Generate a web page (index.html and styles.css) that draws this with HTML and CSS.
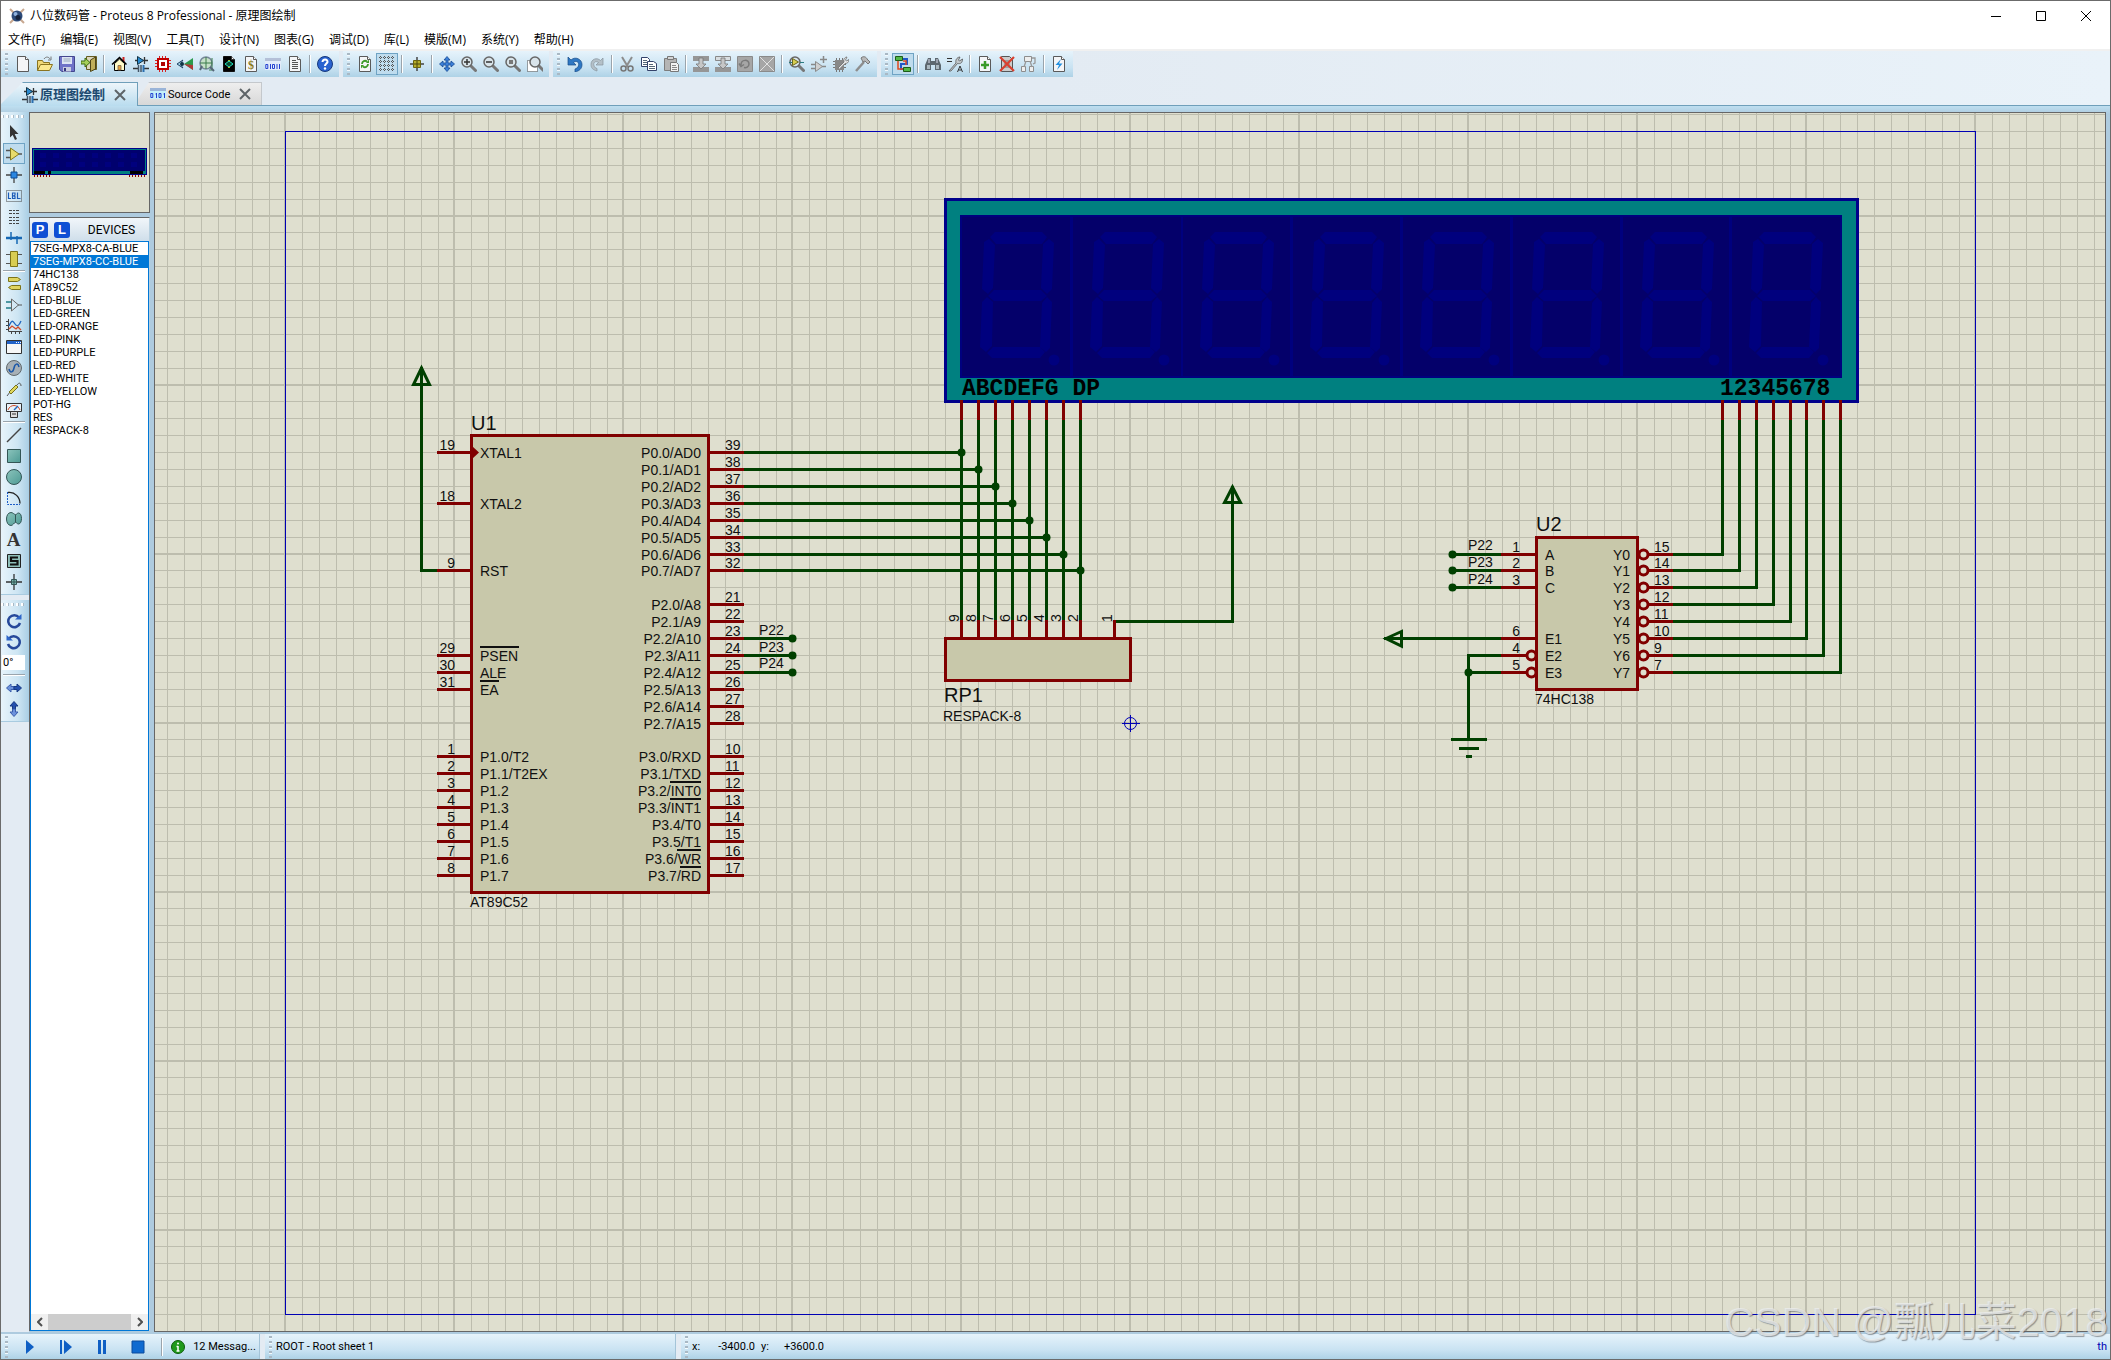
FILE: index.html
```html
<!DOCTYPE html>
<html lang="zh-CN">
<head>
<meta charset="utf-8">
<title>八位数码管 - Proteus 8 Professional - 原理图绘制</title>
<link rel="stylesheet" href="styles.css">
</head>
<body>
<svg class="defs" width="0" height="0" aria-hidden="true">
  <defs>
    <linearGradient id="gTeal" x1="0" y1="0" x2="1" y2="1"><stop offset="0" stop-color="#8cc4bc"/><stop offset="1" stop-color="#4d9a94"/></linearGradient>
    <symbol id="page" viewBox="0 0 16 16"><path d="M2.500 .5h8l3 3v12h-11z" fill="#f4f5f7" stroke="#5a5a5a"/><path d="M10.500 .5v3h3" fill="#fff" stroke="#5a5a5a"/></symbol>
    <symbol id="lens" viewBox="0 0 16 16"><path d="M9.500 9.500l5 5" stroke="#777" stroke-width="3" stroke-linecap="round"/><circle cx="6" cy="6" r="5" fill="#d9e4ea" stroke="#666" stroke-width="1.500"/></symbol>
    <symbol id="schem" viewBox="0 0 16 16"><path d="M2 4.500h13M11.500 1v7M0 12.500h5M11 12.500h5" stroke="#333" stroke-width="1.300"/><path d="M4.500 .5v8l6-4z" fill="#2a8ad0" stroke="#134"/><path d="M5.500 9v7M8 9v7" stroke="#456" stroke-width="1.500"/><path d="M10.500 9v7" stroke="#2a6fb0" stroke-width="2"/></symbol>
    <symbol id="code" viewBox="0 0 16 16"><path d="M0 2h16v11H0z" fill="#c4f0fa"/><path d="M0 2h16v3H0z" fill="#9ab4d8"/><path d="M.8 7.500h2v4h-2zM6.500 7v5M5.500 8h1M9 7.500h2v4H9zM14.500 7v5M13.500 8h1" fill="none" stroke="#2340d0"/></symbol>
    <symbol id="cross" viewBox="0 0 16 16"><path d="M3 3l10 10M13 3L3 13" stroke="#5e6468" stroke-width="2"/></symbol>
  </defs>
</svg>

<header class="titlebar">
  <svg class="app-icon" width="16" height="16" viewBox="0 0 16 16"><path d="M1 1l4 4M15 1l-4 4M1 15l4-4M15 15l-4-4" stroke="#c8a890" stroke-width="2"/><circle cx="8" cy="8" r="5.500" fill="#2c4a78"/><circle cx="6.500" cy="6" r="2" fill="#8eb0dc"/><circle cx="9" cy="9.500" r="2.500" fill="#14223c"/></svg>
  <h1 class="title">八位数码管 - Proteus 8 Professional - 原理图绘制</h1>
  <button class="win" aria-label="最小化"><svg width="10" height="10"><path d="M0 5.500h10" stroke="#000"/></svg></button>
  <button class="win" aria-label="最大化"><svg width="10" height="10"><path d="M.5 .5h9v9h-9z" fill="none" stroke="#000"/></svg></button>
  <button class="win" aria-label="关闭"><svg width="10" height="10"><path d="M0 0l10 10M10 0L0 10" stroke="#000"/></svg></button>
</header>

<nav class="menu">
  <button>文件(F)</button><button>编辑(E)</button><button>视图(V)</button><button>工具(T)</button><button>设计(N)</button><button>图表(G)</button><button>调试(D)</button><button>库(L)</button><button>模版(M)</button><button>系统(Y)</button><button>帮助(H)</button>
</nav>

<div class="toolbars">
  <div class="bar">
    <span class="grip"></span>
    <button aria-label="New"><svg viewBox="0 0 16 16"><use href="#page"/></svg></button>
    <button aria-label="Open"><svg viewBox="0 0 16 16"><path d="M.5 14.500v-10h5l1 2h6v2" fill="#f0d878" stroke="#8a7420"/><path d="M.5 14.500l3-6h12l-3 6z" fill="#fbe88e" stroke="#8a7420"/><path d="M7 3c2-3 5-2 6 0M14 .5V4h-3" fill="none" stroke="#777"/></svg></button>
    <button aria-label="Save"><svg viewBox="0 0 16 16"><path d="M.5 .5h15v15H3l-2.500-2z" fill="#6f72c8" stroke="#44478e"/><path d="M3 1h10v7H3z" fill="#dde4f4"/><path d="M4.500 3h7M4.500 5h7" stroke="#9ab"/><path d="M4 11h8v4.500H4z" fill="#c9cde0"/><path d="M5 12h2v3H5z" fill="#33367e"/></svg></button>
    <button aria-label="Close"><svg viewBox="0 0 16 16"><path d="M5.500 .5h10v13h-10z" fill="#dcd7bc" stroke="#665c22"/><path d="M9.500 4l5-3v12l-5 2.500z" fill="#c0ae5a" stroke="#4d4518"/><path d="M0 5h4V2l5 4.500L4 11V8H0z" fill="#a6cf5a" stroke="#3e6b12"/></svg></button>
    <span class="sep"></span>
    <button aria-label="Home"><svg viewBox="0 0 16 16"><path d="M11.500 1h2v5h-2z" fill="#c22"/><path d="M3.500 7.500v7h10v-7L8.500 3z" fill="#fffbc8" stroke="#000"/><path d="M1 8.500L8.500 1.500 15.500 8.500" fill="none" stroke="#000" stroke-width="1.500"/><path d="M7 9.500h3V14H7z" fill="#e9a23a" stroke="#765" stroke-width=".8"/></svg></button>
    <button aria-label="Schematic"><svg viewBox="0 0 16 16"><use href="#schem"/></svg></button>
    <button aria-label="PCB"><svg viewBox="0 0 16 16"><path d="M4.500 0v16M7.500 0v16M10.500 0v16M0 4.500h16M0 7.500h16M0 10.500h16" stroke="#d82020"/><path d="M3 3h10v10H3z" fill="#fff" stroke="#c00000" stroke-width="2"/><path d="M6 6h4v4H6z" fill="#b00000"/></svg></button>
    <button aria-label="3D"><svg viewBox="0 0 16 16"><path d="M7 8l9-6v12z" fill="#2c9a4c"/><path d="M7 8l9 1v5z" fill="#b03838"/><path d="M0 8l6-4c-2 2-2 6 0 8z" fill="#9fd0e4" stroke="#246"/><circle cx="5" cy="8" r="2" fill="#134"/></svg></button>
    <button aria-label="Gerber"><svg viewBox="0 0 16 16"><circle cx="7" cy="7" r="6" fill="#c6e0c8" stroke="#789" stroke-width="1.500"/><path d="M1 7h12M7 1v12M13 2v12h-3" fill="none" stroke="#3a7a4a"/><path d="M3 10l-2 4M11 11l4 4" stroke="#567" stroke-width="2"/></svg></button>
    <button aria-label="Design Explorer"><svg viewBox="0 0 16 16"><path d="M2.500 .5h8l3 3v12h-11z" fill="#000" stroke="#111"/><path d="M10.500 .5v3h3" fill="#fff" stroke="#333"/><path d="M8 4v2M8 10v2" stroke="#f0f020" stroke-width="1.500"/><path d="M4 8l4-3 4 3-4 3z" fill="#0a4a30" stroke="#20e0c0"/></svg></button>
    <button aria-label="BOM"><svg viewBox="0 0 16 16"><use href="#page"/><text x="8" y="13" font-size="12" text-anchor="middle" class="dollar">$</text></svg></button>
    <button aria-label="Source"><svg viewBox="0 0 16 16"><path d="M0 2h16v3H0z" fill="#b4c0d8"/><path d="M0 5h16v9H0z" fill="#e2ecfa"/><path d="M.8 8.500h2v4h-2zM5.500 8v5M7.500 8.500h2v4h-2zM12 8v5M14.500 8v5" fill="none" stroke="#2340d0"/></svg></button>
    <button aria-label="Notes"><svg viewBox="0 0 16 16"><use href="#page"/><path d="M5 4.500h4M5 6.500h6M5 8.500h6M5 10.500h6M5 12.500h6" stroke="#555"/></svg></button>
    <span class="sep"></span>
    <button aria-label="Help"><svg viewBox="0 0 16 16"><circle cx="8" cy="8" r="7.500" fill="#2a63d0" stroke="#17397c"/><path d="M5.500 6c0-3.500 5.500-3 5 0-.2 1.500-2.500 1.700-2.500 4" fill="none" stroke="#fff" stroke-width="2"/><circle cx="8" cy="12.500" r="1.200" fill="#fff"/></svg></button>
  </div>
  <div class="bar">
    <span class="grip"></span>
    <button aria-label="Redraw"><svg viewBox="0 0 16 16"><use href="#page"/><path d="M5 8c0-3 3-4 5-2.500M11 8c0 3-3 4-5 2.500" fill="none" stroke="#3d9a28" stroke-width="1.800"/><path d="M9 7h3V3.500zM7 9H4v3.500z" fill="#3d9a28"/></svg></button>
    <button class="on" aria-label="Grid"><svg viewBox="0 0 16 16"><path d="M0 1.500h16M0 5.500h16M0 9.500h16M0 13.500h16M1.500 0v16M5.500 0v16M9.500 0v16M13.500 0v16" stroke="#555" stroke-dasharray="1 1"/></svg></button>
    <span class="sep"></span>
    <button aria-label="Origin"><svg viewBox="0 0 16 16"><path d="M8 1v14M1 8h14" stroke="#444" stroke-width="1.500"/><path d="M4.500 4.500h7v7h-7z" fill="#b5ac28" stroke="#6a6410"/><path d="M8 5v6M5 8h6" stroke="#4a4608"/></svg></button>
    <span class="sep"></span>
    <button aria-label="Pan"><svg viewBox="0 0 16 16"><path d="M8 .5l3 3.500H9v3h3V5l3.500 3-3.500 3V9H9v3h2l-3 3.500L5 12h2V9H4v2L.5 8 4 5v2h3V4H5z" fill="#3c80d8" stroke="#164a94" stroke-width=".8"/></svg></button>
    <button aria-label="Zoom in"><svg viewBox="0 0 16 16"><use href="#lens"/><path d="M3 6h6M6 3v6" stroke="#333" stroke-width="1.500"/></svg></button>
    <button aria-label="Zoom out"><svg viewBox="0 0 16 16"><use href="#lens"/><path d="M3 6h6" stroke="#333" stroke-width="1.500"/></svg></button>
    <button aria-label="Zoom all"><svg viewBox="0 0 16 16"><use href="#lens"/><path d="M4 4h4v4H4z" fill="#777"/></svg></button>
    <button aria-label="Zoom area"><svg viewBox="0 0 16 16"><path d="M.5 4.500h10v11H.5z" fill="#fff" stroke="#444" stroke-dasharray="1 1"/><use href="#lens" x="2"/></svg></button>
  </div>
  <div class="bar">
    <span class="grip"></span>
    <button aria-label="Undo"><svg viewBox="0 0 16 16"><path d="M1 1v8h8L6.500 6.500c3-2.500 6 0 5 3-.5 2-2 3-3.500 3.500V16c4-1 7-3 7-7.500C15 3 8 0 4 4z" fill="#2f78c4" stroke="#174a86" stroke-width=".7"/></svg></button>
    <button aria-label="Redo"><svg viewBox="0 0 16 16"><path d="M14 2v7H7l2.500-2.500c-3-2-5.500 0-4.500 3 .5 2 1.500 2.500 3 3V15c-4-1-6-3-6-6.500C2 3 8 1 11.500 4.500z" fill="#b4c0c8" stroke="#87939c" stroke-width=".7"/></svg></button>
    <span class="sep"></span>
    <button aria-label="Cut"><svg viewBox="0 0 16 16"><path d="M3 1l6 10M13 1L7 11" stroke="#8d8d8d" stroke-width="2"/><circle cx="4.500" cy="12.500" r="2.500" fill="none" stroke="#777" stroke-width="1.500"/><circle cx="11.500" cy="12.500" r="2.500" fill="none" stroke="#777" stroke-width="1.500"/></svg></button>
    <button aria-label="Copy"><svg viewBox="0 0 16 16"><path d="M.5 1.500h6l2 2v7h-8z" fill="#fff" stroke="#34426a"/><path d="M2 4.500h4M2 6.500h4M2 8.500h4" stroke="#567"/><path d="M6.500 5.500h6l3 2v7h-9z" fill="#fff" stroke="#34426a"/><path d="M8 8.500h4M8 10.500h6M8 12.500h6" stroke="#567"/></svg></button>
    <button aria-label="Paste"><svg viewBox="0 0 16 16"><path d="M1.500 2.500h12v12h-12z" fill="#b5b5b5" stroke="#7d7d7d"/><path d="M4.500 .5h6v3h-6z" fill="#d5d5d5" stroke="#777"/><path d="M7.500 6.500h6l2 2v7h-8z" fill="#f2f2f2" stroke="#777"/><path d="M9 9.500h4M9 11.500h5M9 13.500h5" stroke="#888"/></svg></button>
    <span class="sep"></span>
    <button aria-label="Block copy"><svg viewBox="0 0 16 16"><path d="M0 0h16v5H0zM0 11h16v5H0z" fill="#969696"/><path d="M6 2h4v6h3l-5 5-5-5h3z" fill="#c6c6c6" stroke="#777" stroke-width=".8"/></svg></button>
    <button aria-label="Block move"><svg viewBox="0 0 16 16"><path d="M.5 .5h15v4H.5z" fill="#d8dde0" stroke="#888"/><path d="M0 11h16v5H0z" fill="#969696"/><path d="M6 2h4v6h3l-5 5-5-5h3z" fill="#c6c6c6" stroke="#777" stroke-width=".8"/></svg></button>
    <button aria-label="Block rotate"><svg viewBox="0 0 16 16"><path d="M.5 .5h15v15H.5z" fill="#a6a6a6" stroke="#8a8a8a"/><path d="M4 9c0-6 8-6 8-1 0 3-3 4-5 3.500M2 7.500l2 3 3-2" fill="none" stroke="#7a7a7a" stroke-width="1.500"/></svg></button>
    <button aria-label="Block delete"><svg viewBox="0 0 16 16"><path d="M.5 .5h15v15H.5z" fill="#a6a6a6" stroke="#8a8a8a"/><path d="M1 1l14 14M15 1L1 15" stroke="#e2e2e2"/></svg></button>
    <span class="sep"></span>
    <button aria-label="Pick"><svg viewBox="0 0 16 16"><use href="#lens"/><path d="M3.500 2.500v7l6-3.500z" fill="#d8cf50" stroke="#6d6820"/><path d="M0 6.500h3M11 6.500h4" stroke="#2a7a80"/></svg></button>
    <button aria-label="Make device"><svg viewBox="0 0 16 16"><path d="M4.500 5.500v10l7-5z" fill="#cfcfcf" stroke="#8b8b8b"/><path d="M0 8.500h4M0 12.500h4M11 10.500h4M12.500 0v7M9 3.500h7" stroke="#888" stroke-width="1.500"/></svg></button>
    <button aria-label="Packaging"><svg viewBox="0 0 16 16"><path d="M3.500 2v14M6.500 2v14M9.500 2v14M0 5.500h13M0 8.500h13M0 11.500h13" stroke="#777"/><path d="M2 4h9v10H2z" fill="#888"/><path d="M5 12l6-6c-1-4 2-5 3-5l-1.500 3 1 1L16 3.500c0 3-2 4-4 4l-6 6z" fill="#e8e8e8" stroke="#6c6c6c" stroke-width=".8"/></svg></button>
    <button aria-label="Decompose"><svg viewBox="0 0 16 16"><path d="M1 15L9 6" stroke="#8e8e8e" stroke-width="2.500"/><path d="M6 2c3-3 6 0 6 1l3 3-2 2-3-3-2 1z" fill="#b9b9b9" stroke="#777"/></svg></button>
  </div>
  <div class="bar">
    <span class="grip"></span>
    <button class="on" aria-label="Wire autorouter"><svg viewBox="0 0 16 16"><path d="M6 3h6v5H6v5h4" fill="none" stroke="#2058c8" stroke-width="2"/><path d="M3 5v8h7M8 5h3v4" fill="none" stroke="#e04820" stroke-width="1.500"/><path d="M.5 .5h7v4h-7zM8.500 11.500h7v4h-7z" fill="#52b848" stroke="#1d5c18"/></svg></button>
    <span class="sep"></span>
    <button aria-label="Search"><svg viewBox="0 0 16 16"><path d="M3 2h3v3h4V2h3l3 7v5h-6v-5H6v5H0V9z" fill="#5d6870"/><path d="M2 9h3v4H2zM11 9h3v4h-3z" fill="#aab8c0"/><path d="M4 3v4M12 3v4" stroke="#dde"/></svg></button>
    <button aria-label="Property assignment"><svg viewBox="0 0 16 16"><path d="M0 2.500h5M0 5.500h5" stroke="#333"/><path d="M2 15l7-8c-1-4 2-6 4-6l-1.500 3 1 1L15.500 3c0 4-2 5-5 4.500L4 15z" fill="#c2c8cc" stroke="#555" stroke-width=".8"/><path d="M10.500 16l2.500-6 2.500 6M11.500 14h3" fill="none" stroke="#333"/></svg></button>
    <span class="sep"></span>
    <button aria-label="New sheet"><svg viewBox="0 0 16 16"><use href="#page"/><path d="M8 5v8M4 9h8" stroke="#3a9a28" stroke-width="2.500"/></svg></button>
    <button aria-label="Delete sheet"><svg viewBox="0 0 16 16"><path d="M2.500 .5h8l3 3v12h-11z" fill="#ccc" stroke="#555"/><path d="M5 5h6M5 8h6M5 11h6" stroke="#777"/><path d="M1 1l14 14M15 1L1 15" stroke="#d84030" stroke-width="2.200"/></svg></button>
    <button aria-label="Goto sheet"><svg viewBox="0 0 16 16"><path d="M3.500 .5h7v5h-7zM.5 10.500h4v5h-4zM8.500 10.500h4v5h-4z" fill="#eee" stroke="#8d8d8d"/><path d="M5 5l-2 6M9 5l2 6M11 2h3v5l-2 1" fill="none" stroke="#999" stroke-width="1.300"/></svg></button>
    <span class="sep"></span>
    <button aria-label="Electrical check"><svg viewBox="0 0 16 16"><use href="#page"/><path d="M10 3L4.500 9H8l-2 5 5.500-6.500H8z" fill="#2290e0"/></svg></button>
  </div>
</div>

<div class="tabs">
  <div class="tab active"><button class="tab-name"><svg class="ico"><use href="#schem"/></svg>原理图绘制</button><button class="tab-x" aria-label="关闭"><svg class="ico"><use href="#cross"/></svg></button></div>
  <div class="tab"><button class="tab-name"><svg class="ico"><use href="#code"/></svg>Source Code</button><button class="tab-x" aria-label="关闭"><svg class="ico"><use href="#cross"/></svg></button></div>
</div>

<main class="work">
  <div class="strips">
    <div class="strip">
      <span class="grip-h"></span>
      <button aria-label="Selection"><svg viewBox="0 0 16 16"><path d="M4 0l8.500 9H8.700l2.300 5-2 1-2.300-5L4 12.500z" fill="#333"/></svg></button>
      <button class="on" aria-label="Component"><svg viewBox="0 0 16 16"><path d="M0 4.500h4M0 11.500h4M11 8h5" stroke="#555" stroke-width="1.500"/><path d="M4.500 2v12L13 8z" fill="#e8dc6c" stroke="#857b1e"/></svg></button>
      <button aria-label="Junction"><svg viewBox="0 0 16 16"><path d="M8 0v16M0 8h16" stroke="#444" stroke-width="1.300"/><path d="M5 5h6v6H5z" fill="#2a86e0" stroke="#0c4a96"/></svg></button>
      <button aria-label="Label"><svg viewBox="0 0 16 16"><path d="M.5 2.500h15v11H.5z" fill="none" stroke="#444" stroke-dasharray="1 1"/><path d="M2.500 4.500v6h2.500M6.500 5h2.500v2L8 8l1 .5v2H6.500zM6.500 7.800h2M11.500 4.500v6h3" stroke="#1c5cb8" fill="none" stroke-width="1.200"/></svg></button>
      <button aria-label="Script"><svg viewBox="0 0 16 16"><path d="M3 1.500h11M3 4.500h11M3 8.500h11M3 11.500h11M3 14.500h11" stroke="#444" stroke-dasharray="3 1 2 1"/></svg></button>
      <button aria-label="Bus"><svg viewBox="0 0 16 16"><path d="M0 8h16" stroke="#1668b4" stroke-width="2.500"/><path d="M5 2v8M11 6v8" stroke="#1668b4" stroke-width="1.500"/></svg></button>
      <button aria-label="Subcircuit"><svg viewBox="0 0 16 16"><path d="M0 3.500h16M0 12.500h16" stroke="#555"/><path d="M4.500 .5h7v15h-7z" fill="#d8cd52" stroke="#7d7418"/></svg></button>
      <span class="sep-h"></span>
      <button aria-label="Terminal"><svg viewBox="0 0 16 16"><path d="M2.500 1.500h9l3 2-3 2h-9zM14.500 9.500h-9l-3 2 3 2h9z" fill="#dfd460" stroke="#7d7418"/></svg></button>
      <button aria-label="Pin"><svg viewBox="0 0 16 16"><path d="M0 5h5M0 11h5" stroke="#1f7c88" stroke-width="1.500"/><path d="M5.500 2v12l7-6z" fill="none" stroke="#666"/><path d="M12 8h4" stroke="#555"/></svg></button>
      <button aria-label="Graph"><svg viewBox="0 0 16 16"><path d="M2.500 1v12.500H16M0 3.500h2M0 7.500h2M0 11.500h2M5.500 14v2M9.500 14v2M13.500 14v2" stroke="#444" fill="none"/><path d="M3 8c3-7 4-5 6-2s4 2 6-3" fill="none" stroke="#2068c0" stroke-width="1.300"/><path d="M3 11l3-3 4 3 2-2 3 3" fill="none" stroke="#d04a28" stroke-width="1.300"/></svg></button>
      <button aria-label="Popup"><svg viewBox="0 0 16 16"><path d="M.5 1.500h15v13H.5z" fill="#f7f7f7" stroke="#333"/><path d="M1 2h14v3H1z" fill="#2262c8"/><path d="M10 3.500h5" stroke="#fff" stroke-dasharray="1 1"/></svg></button>
      <button aria-label="Generator"><svg viewBox="0 0 16 16"><circle cx="8" cy="8" r="7.500" fill="#a7b0b6" stroke="#60686c"/><path d="M3 9c1 4 4 4 5-1s4-5 5-1" fill="none" stroke="#1c58a8" stroke-width="1.500"/></svg></button>
      <button aria-label="Probe"><svg viewBox="0 0 16 16"><path d="M1 15l3-4M11 4c2-3 4-2 4 1" fill="none" stroke="#555"/><path d="M3 11l7-7 2 2-7 7z" fill="#dfd75c" stroke="#77701c"/></svg></button>
      <button aria-label="Instrument"><svg viewBox="0 0 16 16"><path d="M.5 1.500h15v8H.5z" fill="#e8f2fa" stroke="#333"/><path d="M2 8c2-6 10-6 12 0" fill="none" stroke="#d04a28"/><path d="M8 8l4-4" stroke="#2068c0" stroke-width="1.500"/><path d="M4.500 9.500h7v6h-7z" fill="#ddd" stroke="#333"/><path d="M6 12h4" stroke="#333"/></svg></button>
      <span class="sep-h"></span>
      <button aria-label="Line"><svg viewBox="0 0 16 16"><path d="M1 15L15 1" stroke="#444" stroke-width="1.500"/></svg></button>
      <button aria-label="Box"><svg viewBox="0 0 16 16"><path d="M1.500 1.500h13v13h-13z" fill="url(#gTeal)" stroke="#355"/></svg></button>
      <button aria-label="Circle"><svg viewBox="0 0 16 16"><circle cx="8" cy="8" r="7.500" fill="url(#gTeal)" stroke="#355"/></svg></button>
      <button aria-label="Arc"><svg viewBox="0 0 16 16"><path d="M1.500 2v12.500H14" fill="none" stroke="#1c5cc8" stroke-dasharray="2 1"/><path d="M2 2.500c7-1 12 5 12 11" fill="none" stroke="#222" stroke-width="1.300"/></svg></button>
      <button aria-label="Path"><svg viewBox="0 0 16 16"><path d="M5 1.500c2 0 3 2 4.500 2S11 2 12.500 2c4 0 4 11 0 11-1.500 0-1.500-1.500-3-1.500S7 14.500 5 14.500c-6 0-6-13 0-13zM9.500 4v7" fill="url(#gTeal)" stroke="#355"/></svg></button>
      <button class="serif" aria-label="Text">A</button>
      <button aria-label="Symbol"><svg viewBox="0 0 16 16"><path d="M1.500 1.500h13v13h-13z" fill="#8fc0ba" stroke="#222"/><path d="M12 4.500H5v3.500h6.500v3.500H4" fill="none" stroke="#111" stroke-width="2.200"/></svg></button>
      <button aria-label="Marker"><svg viewBox="0 0 16 16"><path d="M8 0v16M0 8h16" stroke="#333" stroke-width="1.300"/><path d="M5.500 5.500h5v5h-5z" fill="#76b3aa" stroke="#355"/><path d="M8 5v6M5 8h6" stroke="#355"/></svg></button>
    </div>
    <div class="strip">
      <span class="grip-h"></span>
      <button aria-label="Rotate clockwise"><svg viewBox="0 0 16 16"><path d="M13 4.500A6 6 0 1 0 14 10" fill="none" stroke="#26489a" stroke-width="2.500"/><path d="M9 6.500h6.500V1z" fill="#2f66c8"/></svg></button>
      <button aria-label="Rotate anticlockwise"><svg viewBox="0 0 16 16"><path d="M3 4.500A6 6 0 1 1 2 10" fill="none" stroke="#26489a" stroke-width="2.500"/><path d="M7 6.500H.5V1z" fill="#2f66c8"/></svg></button>
      <input class="angle" aria-label="Angle" value="0°">
      <span class="sep-h"></span>
      <button aria-label="Mirror X"><svg viewBox="0 0 16 16"><path d="M8 6.500H5V4L.5 8 5 12V9.500h3z" fill="#6c92dc" stroke="#3a5cab"/><path d="M8 6.500h3V4l4.500 4-4.500 4V9.500H8z" fill="#2450ae" stroke="#173a84"/></svg></button>
      <button aria-label="Mirror Y"><svg viewBox="0 0 16 16"><path d="M6.500 8V5H4L8 .5 12 5H9.500v3z" fill="#2450ae" stroke="#173a84"/><path d="M6.500 8v3H4l4 4.500 4-4.500H9.500V8z" fill="#6c92dc" stroke="#3a5cab"/></svg></button>
    </div>
  </div>

  <aside class="side">
    <div class="preview">
      <svg width="116" height="30" viewBox="0 0 116 30" shape-rendering="crispEdges"><path d="M0 0h115v27H0z" fill="#00008b"/><path d="M1 1h113v25H1z" fill="#008080"/><path d="M2 2h111v21H2z" fill="#00006e"/><path d="M8 7h100M8 16h100" stroke="#00007e" stroke-width="5" stroke-dasharray="6 7"/><path d="M2 23h11v3H2zM16 23h3v3h-3zM98 23h13v3H98z" fill="#000"/><path d="M2.500 27v2M5.500 27v2M8.500 27v2M11.500 27v2M14.500 27v2M17.500 27v2M97.500 27v2M100.500 27v2M103.500 27v2M106.500 27v2M109.500 27v2M112.500 27v2" stroke="#900000"/></svg>
    </div>
    <div class="devices">
      <div class="dev-head"><button class="sq">P</button><button class="sq">L</button><h2>DEVICES</h2></div>
      <div class="dev-body">
        <ul>
          <li><button>7SEG-MPX8-CA-BLUE</button></li>
          <li><button class="sel">7SEG-MPX8-CC-BLUE</button></li>
          <li><button>74HC138</button></li>
          <li><button>AT89C52</button></li>
          <li><button>LED-BLUE</button></li>
          <li><button>LED-GREEN</button></li>
          <li><button>LED-ORANGE</button></li>
          <li><button>LED-PINK</button></li>
          <li><button>LED-PURPLE</button></li>
          <li><button>LED-RED</button></li>
          <li><button>LED-WHITE</button></li>
          <li><button>LED-YELLOW</button></li>
          <li><button>POT-HG</button></li>
          <li><button>RES</button></li>
          <li><button>RESPACK-8</button></li>
        </ul>
        <div class="scroll">
          <button aria-label="向左"><svg width="6" height="10"><path d="M5 1L1 5l4 4" fill="none" stroke="#505050" stroke-width="2"/></svg></button>
          <span class="thumb"></span>
          <button aria-label="向右"><svg width="6" height="10"><path d="M1 1l4 4-4 4" fill="none" stroke="#505050" stroke-width="2"/></svg></button>
        </div>
      </div>
    </div>
  </aside>

  <section class="canvas">
    <svg class="sheet" aria-label="Schematic">
      <defs>
        <pattern id="grid" x="453" y="384" width="169" height="169" patternUnits="userSpaceOnUse">
          <path shape-rendering="crispEdges" fill="#bdbdae" d="M0 0h2v169H0zM18 0h1v169h-1zM35 0h1v169h-1zM52 0h1v169h-1zM69 0h1v169h-1zM86 0h1v169h-1zM103 0h1v169h-1zM120 0h1v169h-1zM137 0h1v169h-1zM154 0h1v169h-1zM0 0h169v2H0zM0 17h169v1H0zM0 34h169v1H0zM0 51h169v1H0zM0 68h169v1H0zM0 85h169v1H0zM0 102h169v1H0zM0 119h169v1H0zM0 136h169v1H0zM0 153h169v1H0z"/>
        </pattern>
        <g id="digit">
          <path class="seg" d="M990 237l5-5h47l5 5-5 7h-46zM988 296l6-6h47l6 6-6 5h-47zM987 353l6-6h47l5 5-5 6h-48zM984 242l5-3 6 6-2 43-5 6-6-5zM1043 244l6-5 5 4-2 46-5 5-6-6zM982 302l5-5 6 5-1 44-6 6-6-5zM1042 303l5-6 5 5-2 46-4 4-6-5z"/>
          <circle class="seg" cx="1054" cy="360" r="5.500"/>
        </g>
      </defs>
      <g transform="translate(-155 -113)">
        <rect x="155" y="113" width="100%" height="100%" fill="url(#grid)"/>
        <rect class="frame" x="285.500" y="131.500" width="1690" height="1183"/>

        <!-- eight digit display -->
        <rect x="945.500" y="199.500" width="912" height="202" fill="#008080" stroke="#00008b" stroke-width="3"/>
        <path fill="#00007e" d="M960 215h882v163H960z"/>
        <path fill="#04006a" d="M962 217h108v159H962zM1073 217h108v159h-108zM1183 217h107v159h-107zM1293 217h107v159h-107zM1403 217h107v159h-107zM1513 217h107v159h-107zM1623 217h106v159h-106zM1732 217h108v159h-108z"/>
        <use href="#digit"/><use href="#digit" x="110"/><use href="#digit" x="220"/><use href="#digit" x="330"/><use href="#digit" x="440"/><use href="#digit" x="550"/><use href="#digit" x="660"/><use href="#digit" x="769"/>
        <text class="lcd" x="962" y="395">ABCDEFG DP</text>
        <text class="lcd" x="1720" y="395">12345678</text>

        <!-- component bodies -->
        <g class="body">
          <rect x="471.500" y="435.500" width="237" height="457"/>
          <rect x="945.500" y="638.500" width="185" height="42"/>
          <rect x="1536.500" y="537.500" width="101" height="152"/>
        </g>

        <!-- wires -->
        <path class="wire" d="M744 452.500H961.500M744 469.500H978.500M744 486.500H995.500M744 503.500H1012.500M744 520.500H1029.500M744 537.500H1046.500M744 554.500H1063.500M744 570.500H1080.500M961.500 420V620M978.500 420V620M995.500 420V620M1012.500 420V620M1029.500 420V620M1046.500 420V620M1063.500 420V620M1080.500 420V620M1113 621.500H1232.500V486M437 570.500H421.500V367M744 638.500H792M744 655.500H792M744 672.500H792M1452 554.500H1501M1452 570.500H1501M1452 587.500H1501M1501 638.500H1384M1501 655.500H1468.500V739M1501 672.500H1468.500M1451 739.500H1487M1459 748.500H1479M1466 756.500H1472"/>
        <path class="wire" d="M1673 554.500H1722.500V420M1673 570.500H1739.500V420M1673 587.500H1756.500V420M1673 604.500H1773.500V420M1673 621.500H1790.500V420M1673 638.500H1806.500V420M1673 655.500H1823.500V420M1673 672.500H1840.500V420"/>
        <path class="term" d="M421.500 368L413.500 384.500H429.500ZM1232.500 487L1224.500 502.500H1240.500ZM1386 638.500L1401.500 631.500V646Z"/>
        <g class="dot">
          <circle cx="961.500" cy="452.500" r="4"/><circle cx="978.500" cy="469.500" r="4"/><circle cx="995.500" cy="486.500" r="4"/><circle cx="1012.500" cy="503.500" r="4"/><circle cx="1029.500" cy="520.500" r="4"/><circle cx="1046.500" cy="537.500" r="4"/><circle cx="1063.500" cy="554.500" r="4"/><circle cx="1080.500" cy="570.500" r="4"/>
          <circle cx="792.500" cy="638.500" r="4"/><circle cx="792.500" cy="655.500" r="4"/><circle cx="792.500" cy="672.500" r="4"/>
          <circle cx="1452.500" cy="554.500" r="4"/><circle cx="1452.500" cy="570.500" r="4"/><circle cx="1452.500" cy="587.500" r="4"/><circle cx="1468.500" cy="672.500" r="4"/>
        </g>

        <!-- pins -->
        <path class="pin" d="M437 452.500h34M437 503.500h34M437 570.500h34M437 655.500h34M437 672.500h34M437 689.500h34M437 756.500h34M437 773.500h34M437 790.500h34M437 807.500h34M437 824.500h34M437 841.500h34M437 858.500h34M437 875.500h34"/>
        <path class="pin" d="M710 452.500h34M710 469.500h34M710 486.500h34M710 503.500h34M710 520.500h34M710 537.500h34M710 554.500h34M710 570.500h34M710 604.500h34M710 621.500h34M710 638.500h34M710 655.500h34M710 672.500h34M710 689.500h34M710 706.500h34M710 723.500h34M710 756.500h34M710 773.500h34M710 790.500h34M710 807.500h34M710 824.500h34M710 841.500h34M710 858.500h34M710 875.500h34"/>
        <path class="pin" d="M961.500 400v20M978.500 400v20M995.500 400v20M1012.500 400v20M1029.500 400v20M1046.500 400v20M1063.500 400v20M1080.500 400v20M1722.500 400v20M1739.500 400v20M1756.500 400v20M1773.500 400v20M1790.500 400v20M1806.500 400v20M1823.500 400v20M1840.500 400v20M961.500 620v18M978.500 620v18M995.500 620v18M1012.500 620v18M1029.500 620v18M1046.500 620v18M1063.500 620v18M1080.500 620v18M1114.500 620v18"/>
        <path class="pin" d="M1501 554.500h35M1501 570.500h35M1501 587.500h35M1501 638.500h35M1501 655.500h26M1501 672.500h26M1648 554.500h25M1648 570.500h25M1648 587.500h25M1648 604.500h25M1648 621.500h25M1648 638.500h25M1648 655.500h25M1648 672.500h25"/>
        <path fill="#800000" d="M472 446l7 6.500-7 6.500z"/>
        <g class="bubble">
          <circle cx="1643.500" cy="554.500" r="4.500"/><circle cx="1643.500" cy="570.500" r="4.500"/><circle cx="1643.500" cy="587.500" r="4.500"/><circle cx="1643.500" cy="604.500" r="4.500"/><circle cx="1643.500" cy="621.500" r="4.500"/><circle cx="1643.500" cy="638.500" r="4.500"/><circle cx="1643.500" cy="655.500" r="4.500"/><circle cx="1643.500" cy="672.500" r="4.500"/><circle cx="1531.500" cy="655.500" r="4.500"/><circle cx="1531.500" cy="672.500" r="4.500"/>
        </g>

        <!-- U1 -->
        <text class="ref" x="471" y="430">U1</text>
        <text x="470" y="907">AT89C52</text>
        <text><tspan x="480" y="458">XTAL1</tspan><tspan x="480" y="509">XTAL2</tspan><tspan x="480" y="576">RST</tspan><tspan x="480" y="661">PSEN</tspan><tspan x="480" y="678">ALE</tspan><tspan x="480" y="695">EA</tspan><tspan x="480" y="762">P1.0/T2</tspan><tspan x="480" y="779">P1.1/T2EX</tspan><tspan x="480" y="796">P1.2</tspan><tspan x="480" y="813">P1.3</tspan><tspan x="480" y="830">P1.4</tspan><tspan x="480" y="847">P1.5</tspan><tspan x="480" y="864">P1.6</tspan><tspan x="480" y="881">P1.7</tspan></text>
        <text class="end"><tspan x="701" y="458">P0.0/AD0</tspan><tspan x="701" y="475">P0.1/AD1</tspan><tspan x="701" y="492">P0.2/AD2</tspan><tspan x="701" y="509">P0.3/AD3</tspan><tspan x="701" y="526">P0.4/AD4</tspan><tspan x="701" y="543">P0.5/AD5</tspan><tspan x="701" y="560">P0.6/AD6</tspan><tspan x="701" y="576">P0.7/AD7</tspan><tspan x="701" y="610">P2.0/A8</tspan><tspan x="701" y="627">P2.1/A9</tspan><tspan x="701" y="644">P2.2/A10</tspan><tspan x="701" y="661">P2.3/A11</tspan><tspan x="701" y="678">P2.4/A12</tspan><tspan x="701" y="695">P2.5/A13</tspan><tspan x="701" y="712">P2.6/A14</tspan><tspan x="701" y="729">P2.7/A15</tspan><tspan x="701" y="762">P3.0/RXD</tspan><tspan x="701" y="779">P3.1/TXD</tspan><tspan x="701" y="796">P3.2/INT0</tspan><tspan x="701" y="813">P3.3/INT1</tspan><tspan x="701" y="830">P3.4/T0</tspan><tspan x="701" y="847">P3.5/T1</tspan><tspan x="701" y="864">P3.6/WR</tspan><tspan x="701" y="881">P3.7/RD</tspan></text>
        <path class="over" d="M480 647h39M480 681h19M670 782h31M670 799h31M677 850h24M680 867h21"/>
        <text class="end"><tspan x="455" y="450">19</tspan><tspan x="455" y="501">18</tspan><tspan x="455" y="568">9</tspan><tspan x="455" y="653">29</tspan><tspan x="455" y="670">30</tspan><tspan x="455" y="687">31</tspan><tspan x="455" y="754">1</tspan><tspan x="455" y="771">2</tspan><tspan x="455" y="788">3</tspan><tspan x="455" y="805">4</tspan><tspan x="455" y="822">5</tspan><tspan x="455" y="839">6</tspan><tspan x="455" y="856">7</tspan><tspan x="455" y="873">8</tspan></text>
        <text><tspan x="725" y="450">39</tspan><tspan x="725" y="467">38</tspan><tspan x="725" y="484">37</tspan><tspan x="725" y="501">36</tspan><tspan x="725" y="518">35</tspan><tspan x="725" y="535">34</tspan><tspan x="725" y="552">33</tspan><tspan x="725" y="568">32</tspan><tspan x="725" y="602">21</tspan><tspan x="725" y="619">22</tspan><tspan x="725" y="636">23</tspan><tspan x="725" y="653">24</tspan><tspan x="725" y="670">25</tspan><tspan x="725" y="687">26</tspan><tspan x="725" y="704">27</tspan><tspan x="725" y="721">28</tspan><tspan x="725" y="754">10</tspan><tspan x="725" y="771">11</tspan><tspan x="725" y="788">12</tspan><tspan x="725" y="805">13</tspan><tspan x="725" y="822">14</tspan><tspan x="725" y="839">15</tspan><tspan x="725" y="856">16</tspan><tspan x="725" y="873">17</tspan></text>
        <text><tspan x="759" y="635">P22</tspan><tspan x="759" y="652">P23</tspan><tspan x="759" y="668">P24</tspan></text>

        <!-- RP1 -->
        <text class="ref" x="944" y="702">RP1</text>
        <text x="943" y="721">RESPACK-8</text>
        <g transform="rotate(-90)"><text><tspan x="-622" y="959">9</tspan><tspan x="-622" y="976">8</tspan><tspan x="-622" y="993">7</tspan><tspan x="-622" y="1010">6</tspan><tspan x="-622" y="1027">5</tspan><tspan x="-622" y="1044">4</tspan><tspan x="-622" y="1061">3</tspan><tspan x="-622" y="1078">2</tspan><tspan x="-622" y="1112">1</tspan></text></g>
        <g class="origin"><circle cx="1130.500" cy="723.500" r="6"/><path d="M1122 723.500h18M1130.500 715v17"/></g>

        <!-- U2 -->
        <text class="ref" x="1536" y="531">U2</text>
        <text x="1535" y="704">74HC138</text>
        <text><tspan x="1545" y="560">A</tspan><tspan x="1545" y="576">B</tspan><tspan x="1545" y="593">C</tspan><tspan x="1545" y="644">E1</tspan><tspan x="1545" y="661">E2</tspan><tspan x="1545" y="678">E3</tspan></text>
        <text class="end"><tspan x="1630" y="560">Y0</tspan><tspan x="1630" y="576">Y1</tspan><tspan x="1630" y="593">Y2</tspan><tspan x="1630" y="610">Y3</tspan><tspan x="1630" y="627">Y4</tspan><tspan x="1630" y="644">Y5</tspan><tspan x="1630" y="661">Y6</tspan><tspan x="1630" y="678">Y7</tspan></text>
        <text><tspan x="1654" y="552">15</tspan><tspan x="1654" y="568">14</tspan><tspan x="1654" y="585">13</tspan><tspan x="1654" y="602">12</tspan><tspan x="1654" y="619">11</tspan><tspan x="1654" y="636">10</tspan><tspan x="1654" y="653">9</tspan><tspan x="1654" y="670">7</tspan></text>
        <text class="end"><tspan x="1520" y="552">1</tspan><tspan x="1520" y="568">2</tspan><tspan x="1520" y="585">3</tspan><tspan x="1520" y="636">6</tspan><tspan x="1520" y="653">4</tspan><tspan x="1520" y="670">5</tspan></text>
        <text><tspan x="1468" y="550">P22</tspan><tspan x="1468" y="567">P23</tspan><tspan x="1468" y="584">P24</tspan></text>
      </g>
    </svg>
  </section>
</main>

<footer class="status">
  <div class="panel run">
    <span class="grip"></span>
    <button aria-label="Play"><svg width="16" height="16"><path d="M4 1l8 7-8 7z" fill="#0f5fc4"/></svg></button>
    <button aria-label="Step"><svg width="16" height="16"><path d="M2 1h2v14H2zM6 1l8 7-8 7z" fill="#0f5fc4"/></svg></button>
    <button aria-label="Pause"><svg width="16" height="16"><path d="M4 1h3v14H4zM9 1h3v14H9z" fill="#0f5fc4"/></svg></button>
    <button aria-label="Stop"><svg width="16" height="16"><path d="M2 2h12v12H2z" fill="#0f6ad0" stroke="#0a4a9c"/></svg></button>
    <span class="sep"></span>
    <button class="msgs"><svg width="14" height="14"><circle cx="7" cy="7" r="6.500" fill="#1f9a1c" stroke="#0c5c0a"/><path d="M7 6v5M5.500 6.500H7M5.500 11h3" stroke="#fff" stroke-width="1.500"/><circle cx="7" cy="3.500" r="1" fill="#fff"/></svg>12 Messag...</button>
  </div>
  <div class="panel root"><span class="grip"></span>ROOT - Root sheet 1</div>
  <div class="panel pos"><span class="grip"></span><span class="ax">x:</span><span class="val">-3400.0</span><span class="ax">y:</span><span class="val">+3600.0</span><span class="unit">th</span></div>
</footer>
<div class="watermark">CSDN @瓢儿菜2018</div>
</body>
</html>
```
FILE: styles.css
```css
* { box-sizing: border-box; }

body {
  margin: 0;
  height: 100vh;
  display: flex;
  flex-direction: column;
  position: relative;
  overflow: hidden;
  border: 1px solid #6b6b6b;
  background: #e3ebf3;
  color: #000;
  font: 11px/13px Roboto, "Noto Sans CJK SC", sans-serif;
}

.defs { position: absolute; }

button {
  margin: 0;
  padding: 0;
  border: 0;
  background: none;
  color: inherit;
  font: inherit;
}

/* title and menu */
.titlebar {
  display: flex;
  align-items: center;
  height: 30px;
  background: #fff;
  font: 12px/16px "Open Sans", "Noto Sans CJK SC", sans-serif;
}
.app-icon { margin: 0 5px 0 8px; }
.title { flex: 1; margin: 0; font: inherit; }
.win {
  width: 45px;
  height: 30px;
  display: flex;
  align-items: center;
  justify-content: center;
}
.win:last-child { margin-right: 2px; }

.menu {
  display: flex;
  gap: 1px;
  height: 18px;
  background: #fff;
  font: 12px/18px "Open Sans", "Noto Sans CJK SC", sans-serif;
}
.menu button { padding: 0 7px; }

/* toolbars */
.toolbars {
  display: flex;
  gap: 4px;
  padding-bottom: 5px;
  border-top: 2px solid #f0f0f0;
  background: linear-gradient(90deg, #e3ebf3 50%, #e9f2f9);
}
.bar {
  display: flex;
  align-items: center;
  height: 26px;
  padding-right: 3px;
  background: linear-gradient(#e6f3fb, #c8e2f2 65%, #aed2e6);
}
.grip {
  width: 3px;
  height: 22px;
  margin: 0 4px;
  background: repeating-linear-gradient(#a9b8c4 0 2px, #f4fafd 2px 3px, transparent 3px 5px);
}
.bar button {
  width: 22px;
  height: 22px;
  display: flex;
  align-items: center;
  justify-content: center;
}
.bar svg, .strip svg, .ico { width: 16px; height: 16px; display: block; }
button.on {
  border: 1px solid #6fa3c4;
  background: #bfdcee;
}
.sep {
  width: 2px;
  height: 18px;
  margin: 0 3px;
  border-left: 1px solid #9aa4ac;
  background: #fff;
}
.dollar { font-family: "Liberation Serif", serif; font-weight: bold; fill: #8a7a20; }

/* document tabs */
.tabs {
  display: flex;
  height: 24px;
  border-bottom: 1px solid #6f9fba;
  background: linear-gradient(90deg, #e3ebf3 50%, #e9f2f9);
}
.tab {
  display: flex;
  align-items: center;
  height: 23px;
  border-top: 1px solid #c4c8cc;
  border-right: 1px solid #c4c8cc;
  padding: 0 8px 0 12px;
  gap: 7px;
  background: linear-gradient(#eee, #d8d8d8);
  clip-path: polygon(11px 0, 100% 0, 100% 100%, 0 100%, 0 17px);
}
.tab.active {
  height: 24px;
  padding: 0 9px 0 21px;
  border-color: #6f9fba;
  background: linear-gradient(#edf5fa, #b9dcef);
  clip-path: polygon(22px 0, 100% 0, 100% 100%, 0 100%, 0 22px);
  color: #1d4a70;
  font-size: 13px;
  font-weight: bold;
}
.tab-name { display: flex; align-items: center; gap: 2px; white-space: nowrap; }

/* workspace */
.work {
  flex: 1;
  min-height: 0;
  display: flex;
  padding: 6px 4px 2px 0;
  background: linear-gradient(#bedff0, #aecbdf 8px);
}
.strips {
  width: 28px;
  display: flex;
  flex-direction: column;
  gap: 5px;
  background: #e3ebf3;
}
.strip {
  display: flex;
  flex-direction: column;
  align-items: center;
  padding: 0 3px 2px 0;
  border-bottom: 1px solid #a9cbe0;
  background: linear-gradient(90deg, #e8f4fb, #cde5f3 60%, #a9cee4);
}
.strip button {
  width: 22px;
  height: 21px;
  flex: none;
  display: flex;
  align-items: center;
  justify-content: center;
}
.strip .serif { font: bold 19px/20px "Liberation Serif", serif; color: #333; }
.grip-h {
  width: 25px;
  height: 3px;
  margin: 3px 0 4px;
  background: repeating-linear-gradient(90deg, #fff 0 2px, #a9b8c4 2px 3px, transparent 3px 5px);
}
.sep-h {
  width: 22px;
  height: 2px;
  margin: 1px 0;
  border-top: 1px solid #9aa4ac;
  background: #fff;
}
.angle {
  width: 23px;
  height: 15px;
  margin: 3px 0;
  padding: 0 1px;
  border: 0;
  background: #fff;
  font: inherit;
}

.side {
  width: 121px;
  margin-right: 4px;
  padding-bottom: 1px;
  display: flex;
  flex-direction: column;
  gap: 4px;
}
.preview {
  height: 101px;
  padding: 35px 2px 0;
  border: 1px solid #666;
  background: #dfdfcf;
}
.preview svg { display: block; }
.devices {
  flex: 1;
  display: flex;
  flex-direction: column;
  border: 1px solid #666;
  border-bottom: 0;
  border-right-color: #b5cfe0;
}
.dev-head {
  display: flex;
  align-items: center;
  gap: 6px;
  height: 23px;
  padding: 0 2px;
  background: linear-gradient(#f1f6fa, #cfdeea);
}
.dev-head h2 { flex: 1; margin: 0; text-align: center; font: 12px/16px Roboto, sans-serif; }
.sq {
  width: 16px;
  height: 16px;
  border-radius: 3px;
  background: #0f4fd4;
  color: #fff;
  font: bold 13px/16px "Liberation Sans", sans-serif;
}
.dev-body {
  flex: 1;
  display: flex;
  flex-direction: column;
  justify-content: space-between;
  border: 1px solid #0078d7;
  background: #fff;
}
.dev-body ul { margin: 0; padding: 0; list-style: none; }
.dev-body li { height: 13px; }
.dev-body li button {
  display: block;
  width: 100%;
  height: 13px;
  padding: 0 2px;
  text-align: left;
  white-space: nowrap;
  overflow: hidden;
}
.dev-body li .sel { background: #0078d7; color: #fff; }
.scroll { display: flex; height: 16px; background: #f0f0f0; }
.scroll button { width: 17px; display: flex; align-items: center; justify-content: center; }
.thumb { flex: 1; background: #cdcdcd; }

.canvas {
  flex: 1;
  min-width: 0;
  border: 1px solid #666;
  background: #dfdfcf;
}

/* schematic */
.sheet {
  display: block;
  width: 100%;
  height: 100%;
  font: 14px "Liberation Sans", Arial, sans-serif;
  fill: #101010;
}
.frame { fill: none; stroke: #0000b4; }
.seg { fill: #00007e; }
.lcd { font: bold 23px "Liberation Mono", monospace; fill: #000; }
.ref { font-size: 20px; }
.end { text-anchor: end; }
.body { fill: #c8c8aa; stroke: #800000; stroke-width: 3; }
.wire { fill: none; stroke: #004000; stroke-width: 3; }
.term { fill: none; stroke: #004000; stroke-width: 3; }
.dot { fill: #004000; }
.pin { fill: none; stroke: #800000; stroke-width: 3; }
.bubble { fill: #dfdfcf; stroke: #800000; stroke-width: 3; }
.over { fill: none; stroke: #101010; stroke-width: 2; }
.origin { fill: none; stroke: #0000b4; }

/* status bar */
.status { display: flex; gap: 5px; height: 25px; }
.panel {
  display: flex;
  align-items: center;
  border-right: 1px solid #a4c4d8;
  background: linear-gradient(#e6f3fb, #c8e2f2 65%, #aed2e6);
  white-space: nowrap;
}
.run { width: 259px; }
.run button { width: 36px; display: flex; justify-content: center; }
.run .sep { margin: 0 5px; }
.run .msgs { flex: 1; gap: 8px; align-items: center; }
.root { width: 411px; }
.pos { flex: 1; border: 0; padding-right: 3px; }
.ax { width: 18px; }
.val { width: 45px; text-align: right; margin-right: 6px; }
.unit { flex: 1; text-align: right; color: #0000b4; }

.watermark {
  position: absolute;
  right: 2px;
  bottom: 18px;
  font: 41px/38px "Liberation Sans", "Noto Sans CJK SC", sans-serif;
  color: rgba(238, 240, 240, .75);
  text-shadow: 1px 1px 1px rgba(90, 95, 100, .6);
  pointer-events: none;
}
```
